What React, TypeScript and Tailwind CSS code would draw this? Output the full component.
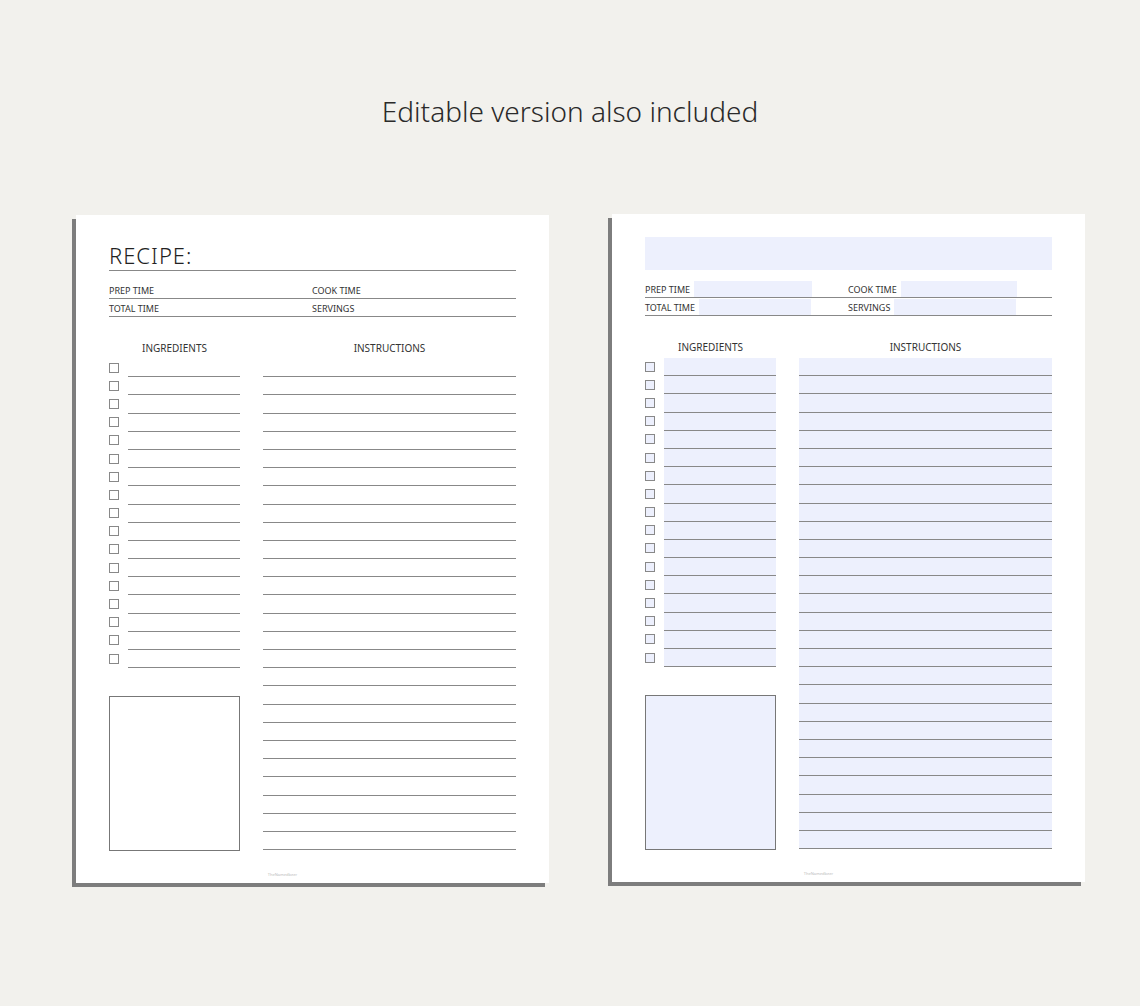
const rows = (n: number) => Array.from({ length: n }, (_, i) => i);

function Page({ editable }: { editable: boolean }) {
  const fill = editable ? "bg-[#edf0fd]" : "";
  return (
    <div className="w-[473px] h-[668px] bg-white shadow-[-4px_4px_0_#7d7d7d] px-[33px] pt-[23px] flex flex-col font-['Open_Sans',sans-serif] text-[#333]">
      {editable ? (
        <div className="h-[33px] bg-[#edf0fd]" />
      ) : (
        <div className="h-[33px] border-b border-[#888] flex items-end pb-[4px]">
          <span className="text-[22px] leading-none font-['Lato',sans-serif] font-light tracking-[1px] text-[#222]">RECIPE:</span>
        </div>
      )}
      <div className="mt-[10px] h-[18px] border-b border-[#888] flex items-end text-[9px] leading-none">
        <div className="w-[203px] flex items-end h-full">
          <span className="pb-[3px]">PREP TIME</span>
          {editable && <div className={`ml-[4px] w-[118px] h-[16px] ${fill}`} />}
        </div>
        <div className="flex items-end h-full">
          <span className="pb-[3px]">COOK TIME</span>
          {editable && <div className={`ml-[4px] w-[116px] h-[16px] ${fill}`} />}
        </div>
      </div>
      <div className="h-[18px] border-b border-[#888] flex items-end text-[9px] leading-none">
        <div className="w-[203px] flex items-end h-full">
          <span className="pb-[3px]">TOTAL TIME</span>
          {editable && <div className={`ml-[4px] w-[112px] h-[16px] ${fill}`} />}
        </div>
        <div className="flex items-end h-full">
          <span className="pb-[3px]">SERVINGS</span>
          {editable && <div className={`ml-[4px] w-[122px] h-[16px] ${fill}`} />}
        </div>
      </div>
      <div className="flex mt-[26px] gap-[23px]">
        <div className="w-[131px] flex flex-col">
          <div className="h-[16px] text-[10px] leading-none pl-[33px]">INGREDIENTS</div>
          <div className="flex flex-col">
            {rows(17).map((i) => (
              <div key={i} className="h-[18.2px] flex items-center">
                <div className={`w-[10px] h-[10px] border border-[#888] ${fill} mb-[1px]`} />
                <div className={`ml-[9px] flex-1 h-full border-b border-[#888] ${fill}`} />
              </div>
            ))}
          </div>
          <div className={`mt-[28px] h-[155px] border border-[#777] ${fill}`} />
        </div>
        <div className="flex-1 flex flex-col">
          <div className="h-[16px] text-[10px] leading-none text-center">INSTRUCTIONS</div>
          <div className={`flex flex-col ${fill}`}>
            {rows(27).map((i) => (
              <div key={i} className="h-[18.2px] border-b border-[#888]" />
            ))}
          </div>
        </div>
      </div>
      <div className="mt-auto mb-[5px] text-center text-[4px] text-[#bbb] -ml-[60px]">TheNamedbeer</div>
    </div>
  );
}

export default function App() {
  return (
    <div className="w-[1140px] h-[1006px] bg-[#f2f1ed] flex flex-col items-center">
      <h1 className="mt-[90px] text-[28px] font-['Lato',sans-serif] font-light text-[#2a2a2a]">Editable version also included</h1>
      <div className="mt-[82px] ml-[21px] flex gap-[63px] items-start">
        <div className="mt-[1px]"><Page editable={false} /></div>
        <Page editable />
      </div>
    </div>
  );
}
